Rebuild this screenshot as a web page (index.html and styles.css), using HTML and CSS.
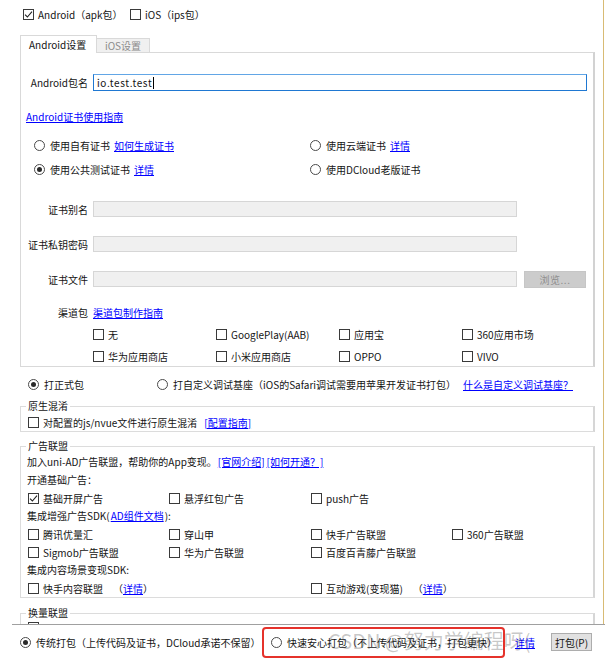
FILE: index.html
```html
<!DOCTYPE html>
<html lang="zh-CN">
<head>
<meta charset="utf-8">
<title>发行</title>
<link rel="stylesheet" href="styles.css">
</head>
<body>
<div class="scroll">
  <div class="platforms">
    <label class="opt w-android"><span class="cb"><svg width="9" height="9" viewBox="0 0 9 9"><path d="M1 4.6 L3.4 7 L8 1.6" fill="none" stroke="#222" stroke-width="1.1"/></svg></span>Android（apk包）</label>
    <label class="opt"><span class="cb"></span>iOS（ips包）</label>
  </div>

  <div class="tabs">
    <div class="tab tab-active">Android设置</div>
    <div class="tab tab-idle">iOS设置</div>
  </div>

  <div class="panel">
    <div class="field pkg">
      <span class="lbl">Android包名</span>
      <div class="input input-focus"><span class="val">io.test.test</span><span class="caret"></span></div>
    </div>
    <div class="guide"><a href="#">Android证书使用指南</a></div>
    <div class="cert-opts">
      <label class="opt"><span class="rb"></span>使用自有证书<a class="lnk" href="#">如何生成证书</a></label>
      <label class="opt"><span class="rb"></span>使用云端证书<a class="lnk" href="#">详情</a></label>
      <label class="opt"><span class="rb on"></span>使用公共测试证书<a class="lnk" href="#">详情</a></label>
      <label class="opt"><span class="rb"></span>使用DCloud老版证书</label>
    </div>
    <div class="field f-first"><span class="lbl">证书别名</span><div class="input input-dis"></div></div>
    <div class="field f-next"><span class="lbl">证书私钥密码</span><div class="input input-dis"></div></div>
    <div class="field f-next"><span class="lbl">证书文件</span><div class="input input-dis"></div><div class="browse">浏览...</div></div>
    <div class="field channel"><span class="lbl">渠道包</span><a href="#">渠道包制作指南</a></div>
    <div class="channel-grid">
      <label class="opt"><span class="cb"></span>无</label>
      <label class="opt"><span class="cb"></span>GooglePlay(AAB)</label>
      <label class="opt"><span class="cb"></span>应用宝</label>
      <label class="opt"><span class="cb"></span>360应用市场</label>
      <label class="opt"><span class="cb"></span>华为应用商店</label>
      <label class="opt"><span class="cb"></span>小米应用商店</label>
      <label class="opt"><span class="cb"></span>OPPO</label>
      <label class="opt"><span class="cb"></span>VIVO</label>
    </div>
  </div>

  <div class="build-type">
    <label class="opt bt-release"><span class="rb on"></span>打正式包</label>
    <label class="opt bt-custom"><span class="rb"></span>打自定义调试基座（iOS的Safari调试需要用苹果开发证书打包）</label>
    <a href="#">什么是自定义调试基座？</a>
  </div>

  <fieldset class="group g-obf">
    <legend>原生混淆</legend>
    <div class="grow">
      <label class="opt"><span class="cb"></span>对配置的js/nvue文件进行原生混淆</label>
      <a class="lnk-wide" href="#">[配置指南]</a>
    </div>
  </fieldset>

  <fieldset class="group g-ad">
    <legend>广告联盟</legend>
    <div class="grow text">加入uni-AD广告联盟，帮助你的App变现。<a href="#">[官网介绍]</a> <a href="#">[如何开通？]</a></div>
    <div class="grow text">开通基础广告：</div>
    <div class="ad-grid">
      <label class="opt"><span class="cb"><svg width="9" height="9" viewBox="0 0 9 9"><path d="M1 4.6 L3.4 7 L8 1.6" fill="none" stroke="#222" stroke-width="1.1"/></svg></span>基础开屏广告</label>
      <label class="opt"><span class="cb"></span>悬浮红包广告</label>
      <label class="opt"><span class="cb"></span>push广告</label>
    </div>
    <div class="grow text">集成增强广告SDK(<a href="#">AD组件文档</a>):</div>
    <div class="ad-grid">
      <label class="opt"><span class="cb"></span>腾讯优量汇</label>
      <label class="opt"><span class="cb"></span>穿山甲</label>
      <label class="opt"><span class="cb"></span>快手广告联盟</label>
      <label class="opt"><span class="cb"></span>360广告联盟</label>
    </div>
    <div class="ad-grid">
      <label class="opt"><span class="cb"></span>Sigmob广告联盟</label>
      <label class="opt"><span class="cb"></span>华为广告联盟</label>
      <label class="opt"><span class="cb"></span>百度百青藤广告联盟</label>
    </div>
    <div class="grow text">集成内容场景变现SDK:</div>
    <div class="ad-grid">
      <label class="opt span2"><span class="cb"></span>快手内容联盟<span class="paren">（<a href="#">详情</a>）</span></label>
      <label class="opt span2"><span class="cb"></span>互动游戏(变现猫)<span class="paren">（<a href="#">详情</a>）</span></label>
    </div>
  </fieldset>

  <fieldset class="group g-swap">
    <legend>换量联盟</legend>
    <div class="swap-row">
      <span class="cb"></span>
    </div>
  </fieldset>
</div>

<div class="bottombar">
  <label class="opt mode-classic"><span class="rb on"></span>传统打包（上传代码及证书，DCloud承诺不保留）</label>
  <div class="highlight">
    <label class="opt"><span class="rb"></span>快速安心打包（不上传代码及证书，打包更快）</label>
  </div>
  <a class="bottom-link" href="#">详情</a>
  <div class="pack-btn">打包(P)</div>
</div>

<div class="watermark">CSDN @努力学编程呀(</div>
</body>
</html>
```

FILE: styles.css
```css
* { box-sizing: border-box; }

html, body {
  margin: 0;
  padding: 0;
  background: #fff;
}

body {
  font-family: "Noto Sans CJK SC", "Noto Sans", sans-serif;
  font-size: 10px;
  color: #141414;
  width: 605px;
  height: 663px;
  overflow: hidden;
  position: relative;
}

a {
  color: #0000ff;
  text-decoration: underline;
}

.scroll {
  width: 604px;
  height: 624px;
  overflow: hidden;
  border-right: 1px solid #d8bb74;
}

/* generic option (checkbox / radio + text) */
.opt {
  display: flex;
  align-items: center;
  height: 18px;
  white-space: nowrap;
}

.cb {
  width: 11px;
  height: 11px;
  border: 1px solid #3a3a3a;
  background: #fff;
  margin-right: 4px;
  flex: none;
  display: flex;
  align-items: center;
  justify-content: center;
}

.cb svg { display: block; }

.rb {
  width: 11px;
  height: 11px;
  border: 1px solid #4a4a4a;
  border-radius: 50%;
  margin-right: 5px;
  flex: none;
  display: flex;
  align-items: center;
  justify-content: center;
  background: #fff;
}

.rb.on::after {
  content: "";
  width: 5px;
  height: 5px;
  border-radius: 50%;
  background: #2a2a2a;
}

.lnk { margin-left: 4px; }

/* top platform row */
.platforms {
  height: 28px;
  display: flex;
  align-items: center;
  padding-left: 23px;
}

.w-android { width: 107px; }

/* tabs */
.tabs {
  display: flex;
  align-items: flex-end;
  margin: 7px 0 0 20px;
  height: 17px;
}

.tab { white-space: nowrap; }

.tab-active {
  width: 77px;
  height: 18px;
  margin-bottom: -1px;
  border: 1px solid #d9d9d9;
  border-bottom: none;
  background: #fff;
  padding-left: 8px;
  line-height: 17px;
  position: relative;
  z-index: 1;
}

.tab-idle {
  width: 53px;
  height: 14px;
  border: 1px solid #d9d9d9;
  border-left: none;
  border-bottom: none;
  background: #f0f0f0;
  color: #8c8c8c;
  text-align: center;
  line-height: 13px;
}

/* panel */
.panel {
  margin-left: 20px;
  width: 575px;
  height: 315px;
  border: 1px solid #d9d9d9;
  border-right: 2px solid #d2d2d2;
}

.field {
  display: flex;
  align-items: center;
}

.lbl {
  width: 67px;
  margin-right: 5px;
  text-align: right;
  flex: none;
  white-space: nowrap;
}

.pkg { margin-top: 21px; height: 17px; }

.input { flex: none; }

.input-focus {
  width: 494px;
  height: 17px;
  border: 1px solid #1f78d2;
  border-top-color: #62a6e6;
  padding-left: 3px;
  display: flex;
  align-items: center;
  letter-spacing: 0.6px;
}

.caret {
  width: 1px;
  height: 12px;
  background: #000;
  margin-left: 1px;
}

.guide {
  margin-top: 17px;
  height: 18px;
  line-height: 18px;
  padding-left: 5px;
}

.cert-opts {
  display: grid;
  grid-template-columns: 276px auto;
  row-gap: 6px;
  margin-top: 10px;
  padding-left: 13px;
}

.f-first { margin-top: 23px; height: 16px; }
.f-next { margin-top: 19px; height: 16px; }

.input-dis {
  width: 424px;
  height: 16px;
  border: 1px solid #d6d6d6;
  background: #f0f0f0;
}

.browse {
  margin-left: 7px;
  width: 62px;
  height: 17px;
  background: #cccccc;
  border: 1px solid #c6c6c6;
  color: #8e8e8e;
  display: flex;
  align-items: center;
  justify-content: center;
  letter-spacing: 0.5px;
}

.channel { margin-top: 16px; height: 18px; }

.channel-grid {
  display: grid;
  grid-template-columns: repeat(4, 123px);
  row-gap: 4px;
  margin-top: 4px;
  padding-left: 72px;
}

/* build type row */
.build-type {
  display: flex;
  align-items: center;
  height: 18px;
  margin-top: 8px;
  padding-left: 28px;
  white-space: nowrap;
}

.bt-release { width: 129px; }
.bt-custom { width: 306px; }

/* group boxes */
.group {
  margin: 0 0 0 20px;
  width: 575px;
  min-width: 0;
  border: 1px solid #dcdcdc;
  border-right: 2px solid #d6d6d6;
  padding: 0 0 0 6px;
}

.group legend {
  padding: 0 2px;
  margin-left: -1px;
  height: 14px;
  line-height: 14px;
}

.grow {
  display: flex;
  align-items: center;
  height: 18px;
  white-space: nowrap;
}

.grow .opt, .ad-grid .opt { margin-left: 1px; }

.text { line-height: 18px; }
.text a { margin: 0 1px; }

.g-obf { margin-top: 6px; }
.lnk-wide { margin-left: 7px; }

.g-ad { margin-top: 7px; }

.ad-grid {
  display: grid;
  grid-template-columns: 141px 142px 141px auto;
  height: 18px;
}

.ad-grid .span2 { grid-column: span 2; }
.ad-grid .span2:first-child { grid-column: 1 / span 2; width: 283px; }

.paren { margin-left: 10px; }

.g-swap { margin-top: 8px; height: 40px; }

.swap-row {
  display: flex;
  padding: 2px 0 0 1px;
  height: 18px;
}

/* bottom bar */
.bottombar {
  margin-left: 12px;
  height: 39px;
  border-top: 1px solid #a0a0a0;
  display: flex;
  align-items: center;
  padding: 0 0 4px 8px;
  white-space: nowrap;
}

.mode-classic { width: 242px; }

.highlight {
  width: 243px;
  height: 31px;
  border: 2px solid #e5322b;
  border-radius: 4px;
  padding-left: 7px;
  display: flex;
  align-items: center;
  flex: none;
}

.bottom-link { margin-left: 10px; }

.pack-btn {
  margin-left: 16px;
  width: 41px;
  height: 18px;
  background: #e1e1e1;
  border: 1px solid #adadad;
  display: flex;
  align-items: center;
  justify-content: center;
}

.watermark {
  position: absolute;
  left: 328px;
  top: 629px;
  font-size: 20px;
  line-height: 24px;
  color: rgba(60, 60, 60, 0.28);
  white-space: nowrap;
  pointer-events: none;
}
```
